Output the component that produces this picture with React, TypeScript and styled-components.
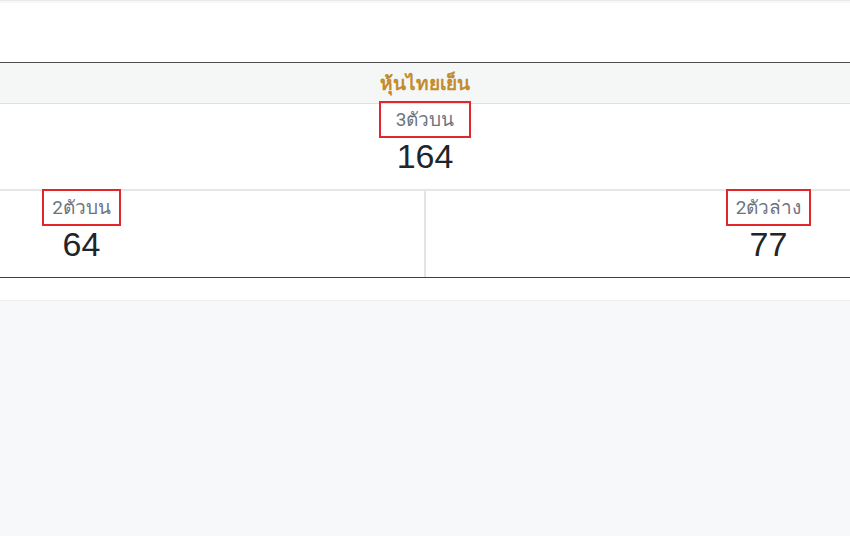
import React from "react";
import styled, { createGlobalStyle } from "styled-components";

const GlobalStyle = createGlobalStyle`
    body {
        margin: 0;
        background: #f7f8f9;
        font-family: "Liberation Sans", Roboto, "Noto Sans", sans-serif;
    }
`;

const Page = styled.div`
    min-height: 536px;
    padding-top: 2px;
    border-top: 1px solid #e8eaeb;
    box-sizing: border-box;
`;

const Card = styled.div`
    display: flex;
    justify-content: center;
    overflow: hidden;
    background: #ffffff;
    padding: 59px 0 22px;
    border-bottom: 1px solid #eef0f1;
`;

const Table = styled.div`
    flex: none;
    width: 1372px;
    display: flex;
    flex-direction: column;
    border-top: 1.5px solid #505050;
    border-bottom: 1.5px solid #3f3f3f;
`;

const Header = styled.div`
    height: 40px;
    display: flex;
    align-items: center;
    justify-content: center;
    background: #f5f6f6;
    border-bottom: 1px solid #e0e0e0;
    color: #c28c2c;
    font-size: 19px;
    font-weight: 700;
`;

const TopRow = styled.div`
    height: 85px;
    display: flex;
    flex-direction: column;
    align-items: center;
`;

const Split = styled.div`
    display: grid;
    grid-template-columns: 1fr 1fr;
    gap: 2px;
    background: #e4e4e4;
    border-top: 2px solid #e6e6e6;
`;

const Cell = styled.div`
    height: 86px;
    display: flex;
    flex-direction: column;
    align-items: center;
    background: #ffffff;
`;

const Label = styled.div<{ $lift?: number; $pad: number }>`
    margin-top: ${(p) => -(p.$lift ?? 0)}px;
    padding: 4px ${(p) => p.$pad}px;
    border: 2px solid #e3262b;
    color: #6c757d;
    font-family: Roboto, "Noto Sans", sans-serif;
    font-size: 19px;
    line-height: 25px;
`;

const Value = styled.div`
    margin-top: -2px;
    color: #212529;
    font-size: 34px;
    line-height: 40px;
`;

export default function App() {
    return (
        <>
            <GlobalStyle />
            <Page>
                <Card>
                    <Table>
                        <Header>หุ้นไทยเย็น</Header>
                        <TopRow>
                            <Label $lift={3} $pad={15}>3ตัวบน</Label>
                            <Value>164</Value>
                        </TopRow>
                        <Split>
                            <Cell>
                                <Label $lift={2} $pad={8}>2ตัวบน</Label>
                                <Value>64</Value>
                            </Cell>
                            <Cell>
                                <Label $lift={2} $pad={8}>2ตัวล่าง</Label>
                                <Value>77</Value>
                            </Cell>
                        </Split>
                    </Table>
                </Card>
            </Page>
        </>
    );
}
